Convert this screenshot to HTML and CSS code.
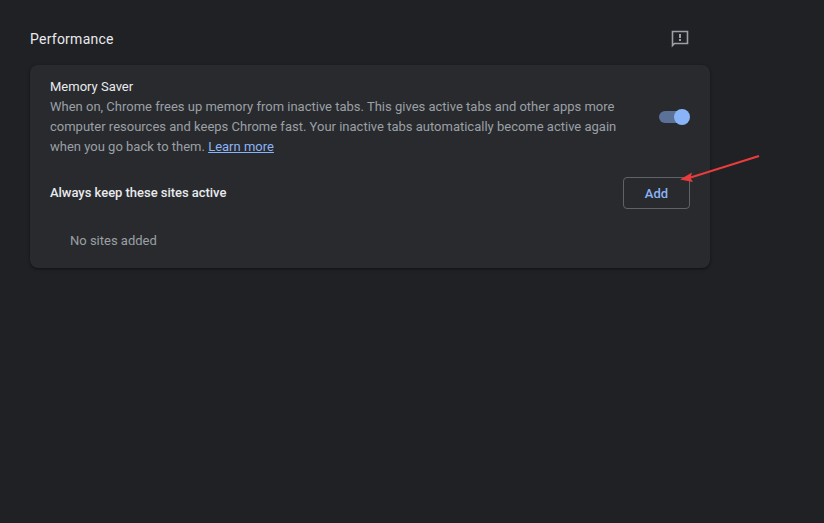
FILE: index.html
```html
<!DOCTYPE html>
<html lang="en">
<head>
<meta charset="utf-8">
<title>Performance</title>
<link rel="stylesheet" href="styles.css">
</head>
<body>
<main class="page">
  <header class="head">
    <h1 class="title">Performance</h1>
    <svg class="feedback" width="20" height="20" viewBox="0 0 20 20" aria-hidden="true">
      <path class="feedback-line" d="M2.500 16.600V2.500h15v12h-13z"/>
      <rect class="feedback-dot" x="9" y="5" width="2" height="4"/>
      <rect class="feedback-dot" x="9" y="10" width="2" height="2"/>
    </svg>
  </header>
  <section class="card">
    <div class="saver">
      <div class="saver-text">
        <div class="label">Memory Saver</div>
        <div class="desc">When on, Chrome frees up memory from inactive tabs. This gives active tabs and other apps more computer resources and keeps Chrome fast. Your inactive tabs automatically become active again when you go back to them. <a class="link" href="#">Learn more</a></div>
      </div>
      <div class="toggle"><span class="knob"></span></div>
    </div>
    <div class="sites">
      <div class="label strong">Always keep these sites active</div>
      <button class="add">Add</button>
    </div>
    <div class="empty">No sites added</div>
  </section>
</main>
<svg class="arrow" width="82" height="30" viewBox="0 0 82 30" aria-hidden="true">
  <path class="arrow-line" d="M79 1L9 23"/>
  <path class="arrow-head" d="M0 24.500L12 17.500L10.500 23L13 27z"/>
</svg>
</body>
</html>
```
FILE: styles.css
```css
* { box-sizing: border-box; }
html, body { height: 100%; }
body {
  margin: 0;
  background: #202124;
  font-family: Roboto, "Liberation Sans", sans-serif;
  font-size: 13px;
  color: #e8eaed;
  overflow: hidden;
  position: relative;
}
.page {
  width: 680px;
  margin-left: 30px;
}
.head {
  height: 65px;
  display: flex;
  align-items: center;
  justify-content: space-between;
  padding: 12px 20px 0 0;
}
.title {
  margin: 0;
  font-size: 14px;
  font-weight: 400;
  letter-spacing: .25px;
  color: #e8eaed;
}
.feedback { display: block; }
.feedback-line { fill: none; stroke: #9aa0a6; stroke-width: 1.6; }
.feedback-dot { fill: #9aa0a6; }
.card {
  background: #292a2d;
  border-radius: 8px;
  box-shadow: 0 1px 3px 1px rgba(0,0,0,.15), 0 1px 2px rgba(0,0,0,.3);
  padding: 12px 20px 17px;
}
.saver {
  display: flex;
  align-items: center;
  justify-content: space-between;
}
.saver-text { width: 570px; }
.label { font-size: 13px; line-height: 20px; font-weight: 400; color: #e8eaed; }
.strong { font-weight: 500; letter-spacing: -.03px; }
.desc { line-height: 20px; color: #9aa0a6; font-size: 13px; }
.link { color: #8ab4f8; }
.toggle {
  position: relative;
  width: 26px;
  height: 12px;
  margin: 0 5px 0 0;
  border-radius: 6px;
  background: #5b7197;
}
.knob {
  position: absolute;
  right: -5px;
  top: -2px;
  width: 16px;
  height: 16px;
  border-radius: 50%;
  background: #8ab4f8;
}
.sites {
  display: flex;
  align-items: center;
  justify-content: space-between;
  margin-top: 20px;
}
.add {
  width: 67px;
  height: 32px;
  border: 1px solid #5f6368;
  border-radius: 4px;
  background: transparent;
  color: #8ab4f8;
  font: 500 13px Roboto, "Liberation Sans", sans-serif;
}
.empty {
  margin-top: 22px;
  padding-left: 20px;
  line-height: 20px;
  color: #9aa0a6;
}
.arrow {
  position: absolute;
  left: 680px;
  top: 155px;
}
.arrow-line { fill: none; stroke: #ea3c3c; stroke-width: 2; }
.arrow-head { fill: #ea3c3c; }
```
